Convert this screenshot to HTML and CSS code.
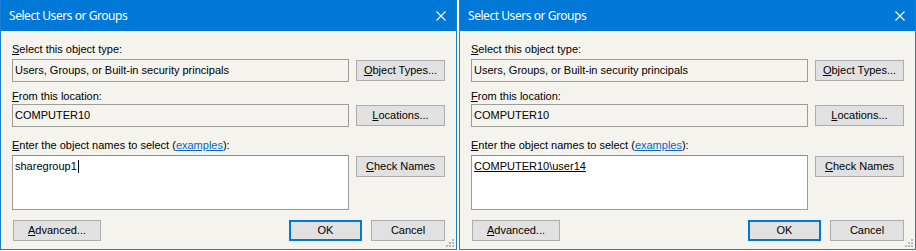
FILE: index.html
```html
<!DOCTYPE html>
<html lang="en">
<head>
<meta charset="utf-8">
<title>Select Users or Groups</title>
<link rel="stylesheet" href="styles.css">
</head>
<body>
<div class="dialogs">
  <section class="dialog">
    <header class="titlebar">
      <span class="title">Select Users or Groups</span>
      <svg class="close" width="10" height="10" viewBox="0 0 10 10"><path d="M0.5 0.5 L9.5 9.5 M9.5 0.5 L0.5 9.5" stroke="#fff" stroke-width="1.1" fill="none"/></svg>
    </header>
    <div class="body">
      <div class="lbl lbl-first"><u>S</u>elect this object type:</div>
      <div class="row">
        <div class="field">Users, Groups, or Built-in security principals</div>
        <button class="btn side"><u>O</u>bject Types...</button>
      </div>
      <div class="lbl lbl-mid"><u>F</u>rom this location:</div>
      <div class="row">
        <div class="field">COMPUTER10</div>
        <button class="btn side"><u>L</u>ocations...</button>
      </div>
      <div class="lbl lbl-last"><u>E</u>nter the object names to select (<a class="link">examples</a>):</div>
      <div class="row">
        <div class="textarea">sharegroup1<span class="caret"></span></div>
        <button class="btn side"><u>C</u>heck Names</button>
      </div>
      <div class="footer">
        <button class="btn wide"><u>A</u>dvanced...</button>
        <span class="spacer"></span>
        <button class="btn ok">OK</button>
        <button class="btn cancel">Cancel</button>
      </div>
    </div>
    <svg class="grip" width="8" height="8" viewBox="0 0 8 8"><g fill="#b9b9b6"><rect x="6" y="0" width="2" height="2"/><rect x="3" y="3" width="2" height="2"/><rect x="6" y="3" width="2" height="2"/><rect x="0" y="6" width="2" height="2"/><rect x="3" y="6" width="2" height="2"/><rect x="6" y="6" width="2" height="2"/></g></svg>
  </section>

  <section class="dialog">
    <header class="titlebar">
      <span class="title">Select Users or Groups</span>
      <svg class="close" width="10" height="10" viewBox="0 0 10 10"><path d="M0.5 0.5 L9.5 9.5 M9.5 0.5 L0.5 9.5" stroke="#fff" stroke-width="1.1" fill="none"/></svg>
    </header>
    <div class="body">
      <div class="lbl lbl-first"><u>S</u>elect this object type:</div>
      <div class="row">
        <div class="field">Users, Groups, or Built-in security principals</div>
        <button class="btn side"><u>O</u>bject Types...</button>
      </div>
      <div class="lbl lbl-mid"><u>F</u>rom this location:</div>
      <div class="row">
        <div class="field">COMPUTER10</div>
        <button class="btn side"><u>L</u>ocations...</button>
      </div>
      <div class="lbl lbl-last"><u>E</u>nter the object names to select (<a class="link">examples</a>):</div>
      <div class="row">
        <div class="textarea"><span class="resolved">COMPUTER10\user14</span></div>
        <button class="btn side"><u>C</u>heck Names</button>
      </div>
      <div class="footer">
        <button class="btn wide"><u>A</u>dvanced...</button>
        <span class="spacer"></span>
        <button class="btn ok">OK</button>
        <button class="btn cancel">Cancel</button>
      </div>
    </div>
    <svg class="grip" width="8" height="8" viewBox="0 0 8 8"><g fill="#b9b9b6"><rect x="6" y="0" width="2" height="2"/><rect x="3" y="3" width="2" height="2"/><rect x="6" y="3" width="2" height="2"/><rect x="0" y="6" width="2" height="2"/><rect x="3" y="6" width="2" height="2"/><rect x="6" y="6" width="2" height="2"/></g></svg>
  </section>
</div>
</body>
</html>
```

FILE: styles.css
```css
html, body {
  margin: 0;
  padding: 0;
  background: #ffffff;
}

body {
  font-family: "Liberation Sans", Arial, sans-serif;
  font-size: 11px;
  color: #000;
}

.dialogs {
  display: flex;
  gap: 2px;
}

.dialog {
  position: relative;
  width: 457px;
  height: 250px;
  box-sizing: border-box;
  border: 1px solid #1a7fd4;
  border-top: none;
  background: #f4f3ee;
  display: flex;
  flex-direction: column;
}

.titlebar {
  height: 31px;
  flex: none;
  background: #0078d7;
  color: #fff;
  display: flex;
  align-items: center;
  padding: 0 10px 0 8px;
  font-family: "Noto Sans", "Open Sans", sans-serif;
  font-size: 12px;
  letter-spacing: -0.45px;
}

.title {
  flex: 1;
}

.close {
  display: block;
  flex: none;
}

.body {
  padding: 0 11px;
  display: flex;
  flex-direction: column;
}

.lbl {
  height: 13px;
  line-height: 13px;
  white-space: nowrap;
}

.lbl-first { margin-top: 12px; margin-bottom: 3px; }
.lbl-mid { margin-top: 8px; margin-bottom: 1px; }
.lbl-last { margin-top: 12px; margin-bottom: 3px; }

.link {
  color: #0066cc;
  text-decoration: underline;
}

.row {
  display: flex;
  align-items: flex-start;
  gap: 7px;
}

.field {
  flex: 1;
  height: 23px;
  box-sizing: border-box;
  border: 1px solid #9c9c9a;
  background: #f4f3ee;
  padding: 4px 2px 0;
  line-height: 13px;
  white-space: nowrap;
}

.textarea {
  flex: 1;
  height: 55px;
  box-sizing: border-box;
  border: 1px solid #9c9c9a;
  border-top-color: #8a8a88;
  background: #ffffff;
  padding: 4px 2px 0;
  line-height: 13px;
  white-space: nowrap;
  display: flex;
  align-items: flex-start;
}

.caret {
  display: inline-block;
  width: 1px;
  height: 13px;
  background: #000;
  margin-left: 1px;
}

.resolved {
  text-decoration: underline;
}

.btn {
  font-family: inherit;
  font-size: 11px;
  color: #000;
  height: 21px;
  box-sizing: border-box;
  border: 1px solid #adadad;
  background: #e1e1e1;
  padding: 0;
  margin: 0;
  line-height: 19px;
  text-align: center;
}

.side {
  width: 89px;
  flex: none;
  margin-top: 1px;
}

.footer {
  display: flex;
  margin-top: 10px;
  gap: 9px;
}

.spacer { flex: 1; }

.wide { width: 88px; margin-left: 1px; }

.ok {
  width: 73px;
  border: 2px solid #0078d7;
  line-height: 17px;
}

.cancel { width: 74px; }

.grip {
  position: absolute;
  right: 2px;
  bottom: 2px;
  display: block;
}
```
